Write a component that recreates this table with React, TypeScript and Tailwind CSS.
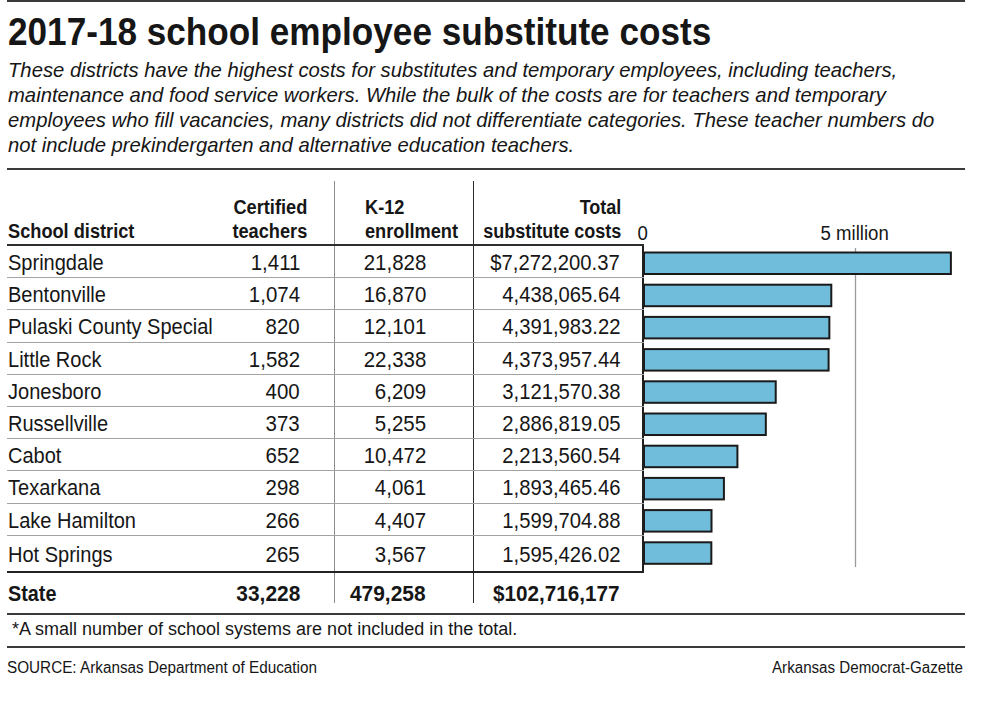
import React from "react";

type Row = [string, string, string, string, number];

const rows: Row[] = [
  ["Springdale", "1,411", "21,828", "$7,272,200.37", 7272200.37],
  ["Bentonville", "1,074", "16,870", "4,438,065.64", 4438065.64],
  ["Pulaski County Special", "820", "12,101", "4,391,983.22", 4391983.22],
  ["Little Rock", "1,582", "22,338", "4,373,957.44", 4373957.44],
  ["Jonesboro", "400", "6,209", "3,121,570.38", 3121570.38],
  ["Russellville", "373", "5,255", "2,886,819.05", 2886819.05],
  ["Cabot", "652", "10,472", "2,213,560.54", 2213560.54],
  ["Texarkana", "298", "4,061", "1,893,465.46", 1893465.46],
  ["Lake Hamilton", "266", "4,407", "1,599,704.88", 1599704.88],
  ["Hot Springs", "265", "3,567", "1,595,426.02", 1595426.02],
];

const ROW_H = 32.2;
const PX_PER_MILLION = 42.2;

function Chart() {
  return (
    <svg width="321" height="327" className="block">
      <line x1="211.5" y1="2" x2="211.5" y2="321" stroke="#9a9a9a" strokeWidth="1.3" />
      {rows.map((r, i) => {
        const top = i * ROW_H;
        return (
          <rect
            key={r[0]}
            x={0}
            y={top + 6.5}
            width={(r[4] / 1e6) * PX_PER_MILLION}
            height={21.5}
            fill="#70bddb"
            stroke="#1a1a1a"
            strokeWidth={2}
          />
        );
      })}
    </svg>
  );
}

export default function App() {
  return (
    <div className="w-[1000px] h-[701px] bg-white text-[#161616] font-['Liberation_Sans',Arial,sans-serif] overflow-hidden">
      <div className="ml-[7px] w-[958px]">
        <div className="h-[2px] bg-[#3a3a3a]" />
        <h1 className="mt-[11px] pl-[1px] text-[38px] leading-[38px] font-bold whitespace-nowrap">
          <span className="inline-block origin-left scale-x-[0.925]">
            2017-18 school employee substitute costs
          </span>
        </h1>
        <p className="mt-[7px] pl-[1px] text-[20.25px] leading-[25px] italic whitespace-nowrap">
          These districts have the highest costs for substitutes and temporary employees, including teachers,
          <br />
          maintenance and food service workers. While the bulk of the costs are for teachers and temporary
          <br />
          employees who fill vacancies, many districts did not differentiate categories. These teacher numbers do
          <br />
          not include prekindergarten and alternative education teachers.
        </p>
        <div className="mt-[10px] h-[2px] bg-[#3a3a3a]" />

        <div className="flex">
          <div className="w-[637px]">
            {/* header */}
            <div className="flex h-[76px] pt-[11px] border-b-2 border-[#2e2e2e] text-[20px] leading-[24px] font-bold whitespace-nowrap">
              <div className="w-[220px] flex items-end pb-[1px] pl-[1px]">
                <span className="inline-block origin-left scale-x-[0.91]">School district</span>
              </div>
              <div className="w-[107px] flex items-end justify-end pb-[1px] pr-[27px] text-right">
                <span className="inline-block origin-right scale-x-[0.91]">
                  Certified
                  <br />
                  teachers
                </span>
              </div>
              <div className="w-[139px] flex items-end pb-[1px] pl-[29.5px] border-l-[1.5px] border-[#8c8c8c]">
                <span className="inline-block origin-left scale-x-[0.91]">
                  K-12
                  <br />
                  enrollment
                </span>
              </div>
              <div className="w-[171px] flex items-end justify-end pb-[1px] pr-[23px] text-right border-l-[1.5px] border-[#2a2a2a]">
                <span className="inline-block origin-right scale-x-[0.9]">
                  Total
                  <br />
                  substitute costs
                </span>
              </div>
            </div>

            {/* body rows */}
            {rows.map((r, i) => {
              const last = i === rows.length - 1;
              return (
                <div
                  key={r[0]}
                  className={
                    last
                      ? "flex h-[37px] border-b-2 border-[#222] text-[22px] leading-[22px] whitespace-nowrap"
                      : "flex h-[32.2px] border-b-[1.5px] border-[#a3a3a3] text-[22px] leading-[22px] whitespace-nowrap"
                  }
                >
                  <div className={last ? "w-[220px] pt-[8px] pl-[1px]" : "w-[220px] pt-[6px] pl-[1px]"}>
                    <span className="inline-block origin-left scale-x-[0.91]">{r[0]}</span>
                  </div>
                  <div className={last ? "w-[107px] pt-[8px] pr-[34px] text-right" : "w-[107px] pt-[6px] pr-[34px] text-right"}>
                    <span className="inline-block origin-right scale-x-[0.93]">{r[1]}</span>
                  </div>
                  <div
                    className={
                      last
                        ? "w-[139px] pt-[8px] pr-[47px] text-right border-l-[1.5px] border-[#8c8c8c]"
                        : "w-[139px] pt-[6px] pr-[47px] text-right border-l-[1.5px] border-[#8c8c8c]"
                    }
                  >
                    <span className="inline-block origin-right scale-x-[0.93]">{r[2]}</span>
                  </div>
                  <div
                    className={
                      last
                        ? "w-[171px] pt-[8px] pr-[22px] text-right border-l-[1.5px] border-r-2 border-l-[#2a2a2a] border-r-[#1f1f1f]"
                        : "w-[171px] pt-[6px] pr-[22px] text-right border-l-[1.5px] border-r-2 border-l-[#2a2a2a] border-r-[#1f1f1f]"
                    }
                  >
                    <span className="inline-block origin-right scale-x-[0.92]">{r[3]}</span>
                  </div>
                </div>
              );
            })}

            {/* state row */}
            <div className="flex h-[30px] text-[22px] leading-[22px] font-bold whitespace-nowrap">
              <div className="w-[220px] pt-[10.5px] pl-[1px]">
                <span className="inline-block origin-left scale-x-[0.9]">State</span>
              </div>
              <div className="w-[107px] pt-[10.5px] pr-[34px] text-right">
                <span className="inline-block origin-right scale-x-[0.95]">33,228</span>
              </div>
              <div className="w-[139px] pt-[10.5px] pr-[47px] text-right border-l-[1.5px] border-[#8c8c8c]">
                <span className="inline-block origin-right scale-x-[0.95]">479,258</span>
              </div>
              <div className="w-[171px] pt-[10.5px] pr-[24px] text-right border-l-[1.5px] border-[#2a2a2a]">
                <span className="inline-block origin-right scale-x-[0.94]">$102,716,177</span>
              </div>
            </div>
          </div>

          <div className="w-[321px]">
            <div className="h-[76px] pt-[53px] flex text-[20px] leading-[20px] whitespace-nowrap">
              <div className="w-0 ml-[-1px] flex justify-center">
                <span className="inline-block scale-x-[0.93]">0</span>
              </div>
              <div className="w-[212px]" />
              <div className="w-0 flex justify-center">
                <span className="inline-block scale-x-[0.93]">5 million</span>
              </div>
            </div>
            <Chart />
          </div>
        </div>

        <div className="mt-[10px] h-[2px] bg-[#3a3a3a]" />
        <p className="mt-[5px] pl-[5px] text-[18px] leading-[18px] whitespace-nowrap">
          *A small number of school systems are not included in the total.
        </p>
        <div className="mt-[8px] h-[2px] bg-[#3a3a3a]" />
        <div className="mt-[12.5px] flex justify-between text-[16px] leading-[16px] whitespace-nowrap">
          <span className="inline-block origin-left scale-x-[0.955]">SOURCE: Arkansas Department of Education</span>
          <span className="inline-block origin-right scale-x-[0.946] pr-[2px]">Arkansas Democrat-Gazette</span>
        </div>
      </div>
    </div>
  );
}
